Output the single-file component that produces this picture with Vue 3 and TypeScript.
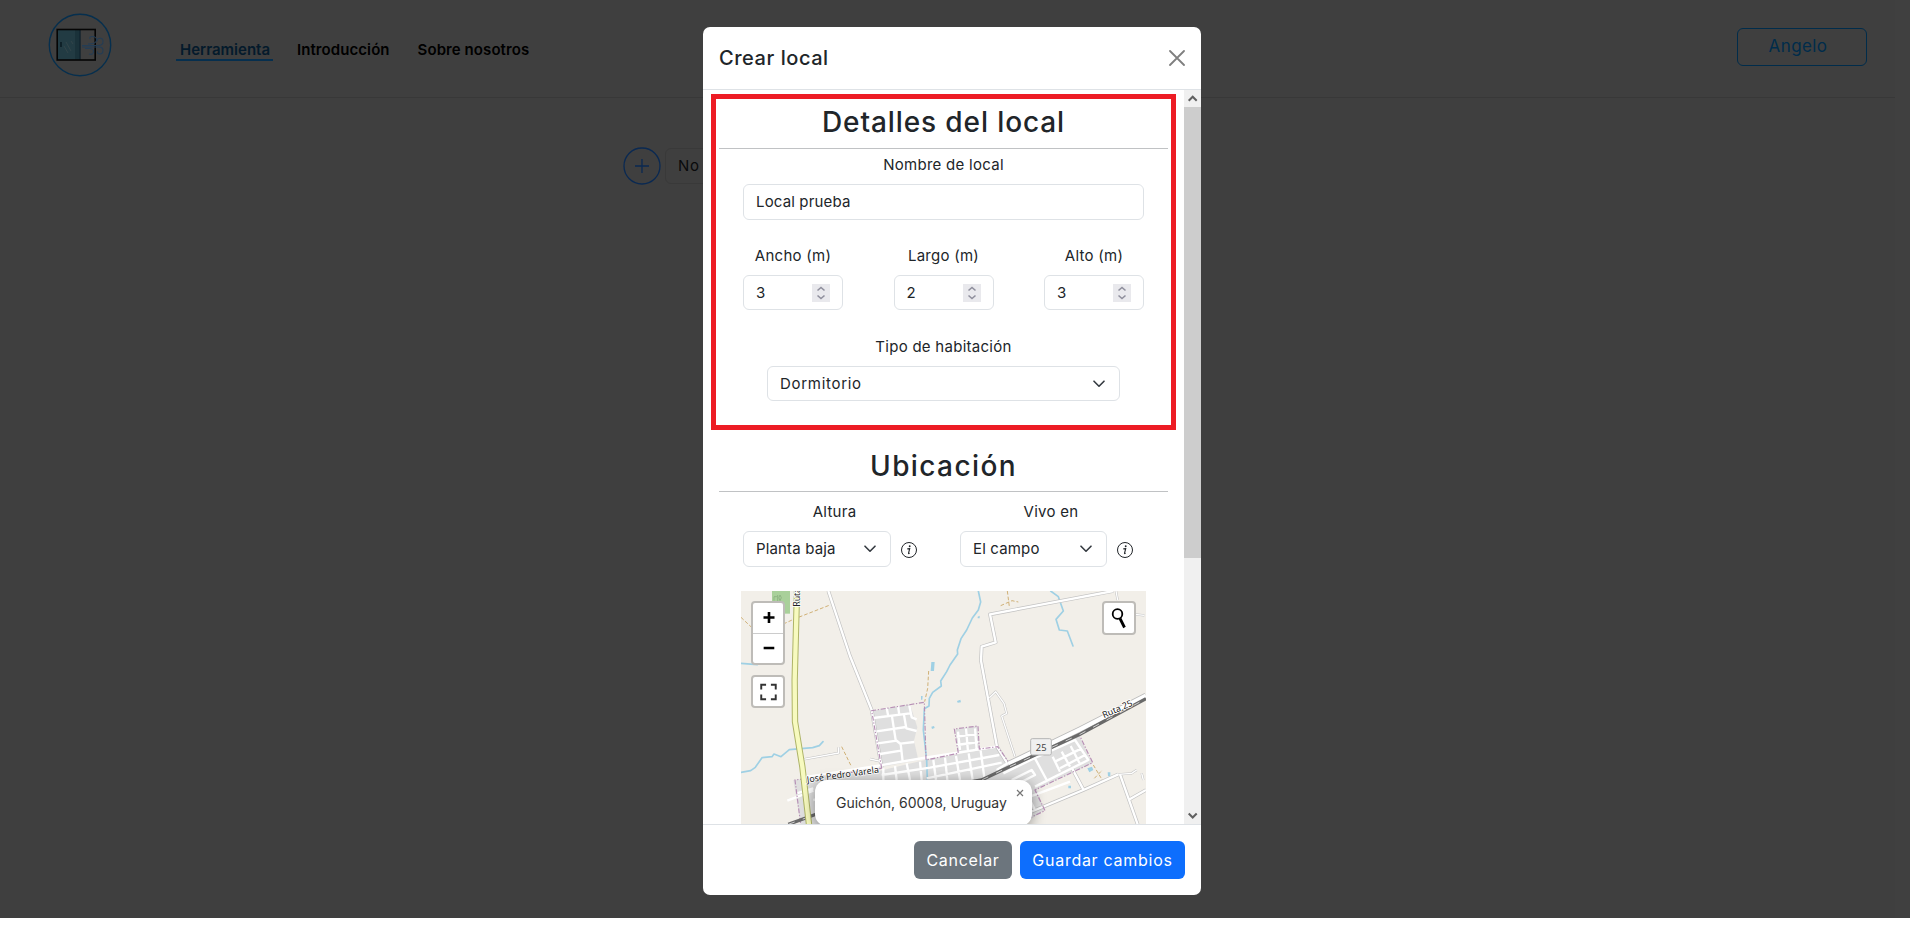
<script setup lang="ts">
interface Dimension {
  label: string
  value: number
}

const navLinks = [
  { label: 'Herramienta', active: true },
  { label: 'Introducción', active: false },
  { label: 'Sobre nosotros', active: false },
]

const dimensions: Dimension[] = [
  { label: 'Ancho (m)', value: 3 },
  { label: 'Largo (m)', value: 2 },
  { label: 'Alto (m)', value: 3 },
]

const places = [
  { label: 'Altura', value: 'Planta baja' },
  { label: 'Vivo en', value: 'El campo' },
]
</script>

<template>
  <div class="screen">
    <div class="page">
      <header class="topbar">
        <svg class="logo" viewBox="0 0 64 64">
          <circle cx="32" cy="32" r="30.7" fill="none" stroke="#062f4e" stroke-width="1.4" />
          <rect x="10" y="17" width="22" height="30" fill="#223b43" />
          <path d="M28 17v30M30 17v30" stroke="#122a33" stroke-width="1" />
          <path d="M32 17v30" stroke="#0b1d29" stroke-width="1.2" />
          <rect x="9.2" y="16.5" width="38" height="30.5" fill="none" stroke="#050505" stroke-width="1.6" />
          <path d="M13 29v5" stroke="#0a1b22" stroke-width="1.6" />
          <path d="M18 29l5 9M16 33l4 7M23 28l2 3" fill="none" stroke="#3a494c" stroke-width=".7" />
          <g fill="none" stroke="#243d55" stroke-width="1.1">
            <path d="M34 32.500h16q5 0 5-3.800t-3.300-3.400-2.500 3M34 34h17q4 0 4 3.500t-3 3.500-2.500-2.600" />
            <path d="M40 31q8 0 8.500-3.500t-3.500-4-3 2.500M37 35.500h5q4 .5 3.500 3.500t-4.500 2" />
          </g>
        </svg>
        <nav class="nav">
          <a v-for="link in navLinks" :key="link.label" class="nav-link" :class="{ active: link.active }">{{ link.label }}</a>
        </nav>
        <button class="user">Angelo</button>
      </header>
      <main class="toolbar">
        <svg class="add" viewBox="0 0 38 38">
          <circle cx="19" cy="19" r="18" />
          <path d="M12 19h14M19 12v14" />
        </svg>
        <div class="empty">No</div>
      </main>
    </div>

    <section class="modal">
      <header class="modal-head">
        <h5>Crear local</h5>
        <svg class="close" viewBox="0 0 16 16"><path d="M1 1l14 14M15 1L1 15" /></svg>
      </header>

      <div class="modal-body">
        <div class="content">
          <h2>Detalles del local</h2>
          <div class="group name">
            <label>Nombre de local</label>
            <div class="field"><span>Local prueba</span></div>
          </div>
          <div class="dims">
            <div v-for="d in dimensions" :key="d.label" class="group">
              <label>{{ d.label }}</label>
              <div class="field short">
                <span>{{ d.value }}</span>
                <svg class="spin" viewBox="0 0 18 18"><path d="M5.500 6.500L9 3.500l3.500 3M5.500 11.500l3.500 3 3.500-3" /></svg>
              </div>
            </div>
          </div>
          <div class="group type">
            <label>Tipo de habitación</label>
            <div class="field short">
              <span class="room">Dormitorio</span>
              <svg class="chev" viewBox="0 0 12 8"><path d="M1 1.200l5 5 5-5" /></svg>
            </div>
          </div>
          <h2 class="second">Ubicación</h2>
          <div class="places">
            <div v-for="p in places" :key="p.label" class="place">
              <div class="group">
                <label>{{ p.label }}</label>
                <div class="field">
                  <span>{{ p.value }}</span>
                  <svg class="chev" viewBox="0 0 12 8"><path d="M1 1.200l5 5 5-5" /></svg>
                </div>
              </div>
              <svg class="info" viewBox="0 0 16 16">
                <circle cx="8" cy="8" r="7.500" fill="none" stroke="#212529" />
                <path d="M6.300 6.900l2.400-.3-1.200 4.700q-.1.700 1.100 0" fill="none" stroke="#212529" stroke-width="1.100" />
                <circle cx="8.700" cy="4.300" r=".95" fill="#212529" />
              </svg>
            </div>
          </div>
          <div class="map">
            <svg class="tiles" viewBox="33 33 1215 699" preserveAspectRatio="none">
              <rect x="33" y="33" width="1215" height="699" fill="#f2efe9" />
              <rect x="126" y="33" width="54" height="68" fill="#a9d09a" />
              <path d="M132 62V50h8l3-4v18M150 62q-7-9 0-17 8 8 0 17" fill="none" stroke="#8fb583" stroke-width="3" />
              <g fill="#dfdfdf">
                <path d="M428 392L540 373L562 442L552 482L565 540L450 562Z" />
                <path d="M675 448L742 438L750 505L684 520Z" />
                <path d="M190 600L450 572L585 540L800 502L838 552L1045 462L1087 550L920 628L943 690L880 733H212Z" />
              </g>
              <g fill="none" stroke="#9fd0e4" stroke-width="5" stroke-linejoin="round" stroke-linecap="round">
                <path d="M33 577L62 572L76 562L96 533L126 530L132 522L153 530L178 509L248 503L268 497L279 485" />
                <path d="M33 250L82 254" />
                <path d="M745 33L752 66L745 90L727 114L710 150L693 176L682 210L683 222L660 255L650 275L632 303L634 318L608 337L598 355L597 378L583 386L580 450L590 540L592 600" />
                <path d="M962 33L985 50L1000 93L978 118L988 150L1012 153L1029 198" />
              </g>
              <g fill="#9fd0e4">
                <path d="M604 246h10l-2 27h-10zM681 363l10-4 2 8-10 1zM604 440l8-2 2 6-8 3zM1072 565l14-5 4 10-12 7zM1133 577h8v12h-7zM1015 617h8v8h-8zM743 110l6-3v8h-6zM573 348h5l-1 11h-4z" />
              </g>
              <g fill="none" stroke="#c9a35f" stroke-width="2.500" stroke-dasharray="11 6">
                <path d="M33 112L68 145M160 132L195 116L300 75M596 273L593 325L584 365M335 500L363 557M832 33L838 80M812 77L846 62L865 66M1090 555L1118 602M1093 595L1117 570" />
              </g>
              <g fill="none" stroke="#c2c2c2" stroke-width="11" stroke-linejoin="round">
                <path d="M295 33L360 228L425 390L455 563M1150 33L780 103L797 187L755 200L753 242L801 500L832 550M880 705L1060 630L1165 583M1170 583L1223 733M1195 660L1248 630M1025 563L1060 628" />
              </g>
              <g fill="none" stroke="#c2c2c2" stroke-width="7" stroke-linejoin="round">
                <path d="M220 538L326 519V502M420 537L455 545M778 353L797 335L822 370L830 400L815 408L855 530M1158 33L1163 60M1215 103L1243 106M1165 583L1205 580L1220 570M1235 580L1240 600" />
              </g>
              <g fill="none" stroke="#fff" stroke-width="4" stroke-linejoin="round">
                <path d="M220 538L326 519V502M420 537L455 545M778 353L797 335L822 370L830 400L815 408L855 530M1158 33L1163 60M1215 103L1243 106M1165 583L1205 580L1220 570M1235 580L1240 600" />
              </g>
              <g fill="none" stroke="#fff" stroke-width="7" stroke-linejoin="round">
                <path d="M295 33L360 228L425 390L455 563M1150 33L780 103L797 187L755 200L753 242L801 500L832 550M880 705L1060 630L1165 583M1170 583L1223 733M1195 660L1248 630M1025 563L1060 628" />
                <path d="M430 414L540 400M440 454L528 441M444 490L500 482L511 491L553 486M450 522L513 512M470 383L475 410M504 378L508 405M486 410L497 480L512 492L518 545M538 377L545 412L560 418M522 405L529 445L560 453" />
                <path d="M172 662L250 632M200 640L250 625M220 592L450 556L580 534L800 500M460 565L460 600M495 558L500 600M530 550L540 600M570 545L575 600M610 540L618 600M645 533L652 600M678 528L690 600M716 520L728 600M752 512L764 600M455 585L600 563L808 525M590 595L815 548M684 455L690 510M708 445L714 515M735 445L740 510M680 470L740 462M680 495L745 486M800 570L840 545M820 580L910 536L1035 480L1075 540L915 620M915 535L950 600M968 530L990 575M995 515L1020 560M1022 498L1050 552M975 545L1055 505M990 565L1065 525M845 600L905 570L915 585L870 608M900 650L1020 605M880 620L915 690M250 660L300 650" />
              </g>
              <g fill="none" stroke="#b78fb5" stroke-width="3.500" stroke-dasharray="15 5 4 5">
                <path d="M455 565L425 392L583 367L588 540L685 520L673 447L744 438L748 507L803 500L837 548L1045 458L1088 548L915 630L945 692L885 720M455 565L195 600L212 733" />
              </g>
              <path d="M835 552L1050 448L1248 347" fill="none" stroke="#bbb" stroke-width="18" />
              <path d="M835 552L1050 448L1248 347" fill="none" stroke="#fff" stroke-width="13" />
              <path d="M175 733L260 702L520 640L755 600L835 562L1050 463L1248 356" fill="none" stroke="#696969" stroke-width="10" />
              <path d="M175 733L260 702L520 640L755 600L835 562L1050 463L1248 356" fill="none" stroke="#d0d0d0" stroke-width="3" stroke-dasharray="20 26" />
              <path d="M201 33L194 300L195 425L217 560L237 733" fill="none" stroke="#aeb467" stroke-width="19" />
              <path d="M201 33L194 300L195 425L217 560L237 733" fill="none" stroke="#f7fabf" stroke-width="13" />
              <g font-family="Noto Sans, sans-serif" font-size="27" fill="#222" stroke="#fff" stroke-width="5" paint-order="stroke" stroke-linejoin="round">
                <text transform="translate(211 80) rotate(-90)" textLength="56">Ruta</text>
                <text transform="translate(232 608) rotate(-8)" textLength="218">José Pedro Varela</text>
                <text transform="translate(1122 415) rotate(-24)" textLength="96">Ruta 25</text>
              </g>
              <rect x="902" y="476" width="62" height="49" rx="5" fill="#f0f0f0" stroke="#b5b5b5" stroke-width="3" />
              <text x="917" y="512" font-family="Noto Sans, sans-serif" font-size="28" fill="#444" textLength="33">25</text>
            </svg>
            <div class="control zoom">
              <svg viewBox="0 0 30 30"><path d="M10.500 14.500h11M16 9v11" /></svg>
              <svg viewBox="0 0 30 30"><path d="M10.500 14.500h11" /></svg>
            </div>
            <div class="control full">
              <svg viewBox="0 0 30 30"><path class="thin" d="M8 13V8h5M18 8h5v5M23 18v5h-5M13 23H8v-5" /></svg>
            </div>
            <div class="control search">
              <svg viewBox="0 0 30 30"><circle class="lens" cx="13.500" cy="11" r="4.800" /><path class="handle" d="M16 15.500l4.500 9" /></svg>
            </div>
            <div class="popup">
              Guichón, 60008, Uruguay
              <svg class="popup-close" viewBox="0 0 8 8"><path d="M1 1l6 6M7 1L1 7" /></svg>
            </div>
          </div>
        </div>
        <div class="scrollbar">
          <svg viewBox="0 0 17 17"><path d="M4.700 10.700l4-4 4 4" /></svg>
          <div class="thumb"></div>
          <svg class="down" viewBox="0 0 17 17"><path d="M4.700 6.500l4 4 4-4" /></svg>
        </div>
        <div class="highlight"></div>
      </div>

      <footer class="modal-foot">
        <button class="btn cancel">Cancelar</button>
        <button class="btn save">Guardar cambios</button>
      </footer>
    </section>
  </div>
</template>

<style>
body { margin: 0; background: #fff; }
</style>

<style scoped>
* { box-sizing: border-box; }
.screen { position: relative; width: 1918px; height: 926px; overflow: hidden; background: #fff; color: #212529; font: 15px/24px Inter, 'Open Sans', sans-serif; }
.page { width: 1910px; height: 918px; background: #3f3f3f; border-right: 15px solid #404040; }
.topbar { display: flex; align-items: flex-start; height: 98px; border-bottom: 1px solid #383838; padding-left: 48px; }
.logo { width: 64px; height: 64px; margin-top: 13px; }
.nav { display: flex; gap: 20px; margin: 37px 0 0 64px; }
.nav-link { height: 24px; padding: 1px 4px 0; color: #000; font-weight: 600; letter-spacing: .08px; white-space: nowrap; }
.nav-link.active { width: 97px; color: #041a2b; border-bottom: 2px solid #062f4e; letter-spacing: 0; }
.user { width: 130px; height: 38px; margin: 28px 28px 0 auto; padding: 0 8px 2px 0; background: none; border: 1px solid #002c4b; border-radius: 6px; color: #002c4b; font: 17px/24px Inter, sans-serif; letter-spacing: .4px; text-align: center; }
.toolbar { display: flex; align-items: flex-start; gap: 4px; padding: 50px 0 0 623px; }
.add { width: 38px; height: 38px; margin-top: -1px; fill: none; stroke: #0a2952; stroke-width: 1.3; }
.empty { width: 200px; height: 36px; padding: 5px 12px; border: 1px solid #393939; border-radius: 6px; color: #090a0b; letter-spacing: .6px; }

.modal { position: absolute; left: 703px; top: 27px; width: 498px; height: 868px; display: flex; flex-direction: column; background: #fff; border-radius: 7px; overflow: hidden; }
.modal-head { display: flex; align-items: center; justify-content: space-between; height: 63px; padding: 0 16px; border-bottom: 1px solid #dee2e6; }
h5 { margin: 0; font-size: 20px; font-weight: 500; line-height: 30px; letter-spacing: .55px; }
.close { width: 16px; height: 16px; fill: none; stroke: #7f7f7f; stroke-width: 1.8; stroke-linecap: round; }
.modal-body { position: relative; display: flex; height: 734px; }
.content { flex: 1; padding: 0 16px; overflow: hidden; }
h2 { height: 59px; margin: 0; padding-top: 14px; border-bottom: 1px solid #c0c2c4; font-size: 28px; font-weight: 500; line-height: 36px; letter-spacing: .9px; text-align: center; white-space: nowrap; }
h2.second { margin-top: 32px; padding-top: 15px; letter-spacing: 1.4px; }
.group { display: flex; flex-direction: column; gap: 7px; text-align: center; white-space: nowrap; }
label { display: block; height: 24px; letter-spacing: .27px; }
.field { display: flex; align-items: center; justify-content: space-between; height: 36px; padding: 0 12px; border: 1px solid #dee2e6; border-radius: 6px; letter-spacing: .15px; }
.field.short { height: 35px; }
.room { letter-spacing: .7px; }
.name { margin: 4px 24px 0; }
.dims { display: grid; grid-template-columns: repeat(3, 100px); justify-content: space-between; margin: 24px 24px 0; }
.spin { width: 18px; height: 18px; background: #e9e9ed; fill: none; stroke: #8f8f9d; stroke-width: 1.6; }
.type { margin: 25px 48px 0; }
.chev { width: 12px; height: 8px; margin-right: 2px; fill: none; stroke: #343a40; stroke-width: 1.6; stroke-linecap: round; stroke-linejoin: round; }
.places { display: flex; gap: 43px; margin: 8px 24px 0; }
.place { display: flex; align-items: flex-end; gap: 10px; }
.place .group { width: 148px; }
.place:last-child .group { width: 147px; }
.place label { padding-left: 35px; }
.info { width: 16px; height: 16px; margin-bottom: 9px; }
.map { position: relative; width: 405px; height: 233px; margin: 24px 0 0 22px; overflow: hidden; }
.tiles { display: block; width: 405px; height: 233px; }
.control { position: absolute; left: 10px; background: #fff; border: 2px solid #bebcb8; border-radius: 4px; }
.control svg { display: block; width: 30px; height: 30px; fill: none; stroke: #000; stroke-width: 2.6; }
.control svg + svg { border-top: 1px solid #ccc; }
.zoom { top: 10px; }
.full { top: 84px; }
.full svg { height: 29px; }
.search { left: auto; right: 10px; top: 10px; }
.control .thin { stroke: #333; stroke-width: 2; }
.control .lens { stroke-width: 1.8; }
.control .handle { stroke-width: 2.8; }
.popup { position: absolute; left: 74px; top: 189px; width: 217px; height: 46px; padding: 11px 0 0 21px; background: #fff; border-radius: 12px; box-shadow: 0 3px 14px rgba(0, 0, 0, .4); color: #333; font-size: 14px; white-space: nowrap; }
.popup-close { position: absolute; right: 8px; top: 9px; width: 8px; height: 8px; fill: none; stroke: #757575; stroke-width: 1.2; }
.scrollbar { width: 17px; display: flex; flex-direction: column; background: #f0f0f0; }
.scrollbar svg { width: 17px; height: 17px; fill: none; stroke: #606060; stroke-width: 2; }
.thumb { height: 451px; background: #cdcdcd; }
.down { margin-top: auto; }
.highlight { position: absolute; left: 8px; top: 4px; width: 465px; height: 336px; border: 5px solid #ed1c24; }
.modal-foot { display: flex; justify-content: flex-end; gap: 8px; height: 71px; padding: 16px; border-top: 1px solid #dee2e6; }
.btn { height: 38px; padding: 0; border: 0; border-radius: 6px; color: #fff; font: 16px/24px Inter, sans-serif; letter-spacing: .72px; white-space: nowrap; }
.cancel { width: 98px; background: #6c757d; }
.save { width: 165px; background: #0d6efd; }
</style>
